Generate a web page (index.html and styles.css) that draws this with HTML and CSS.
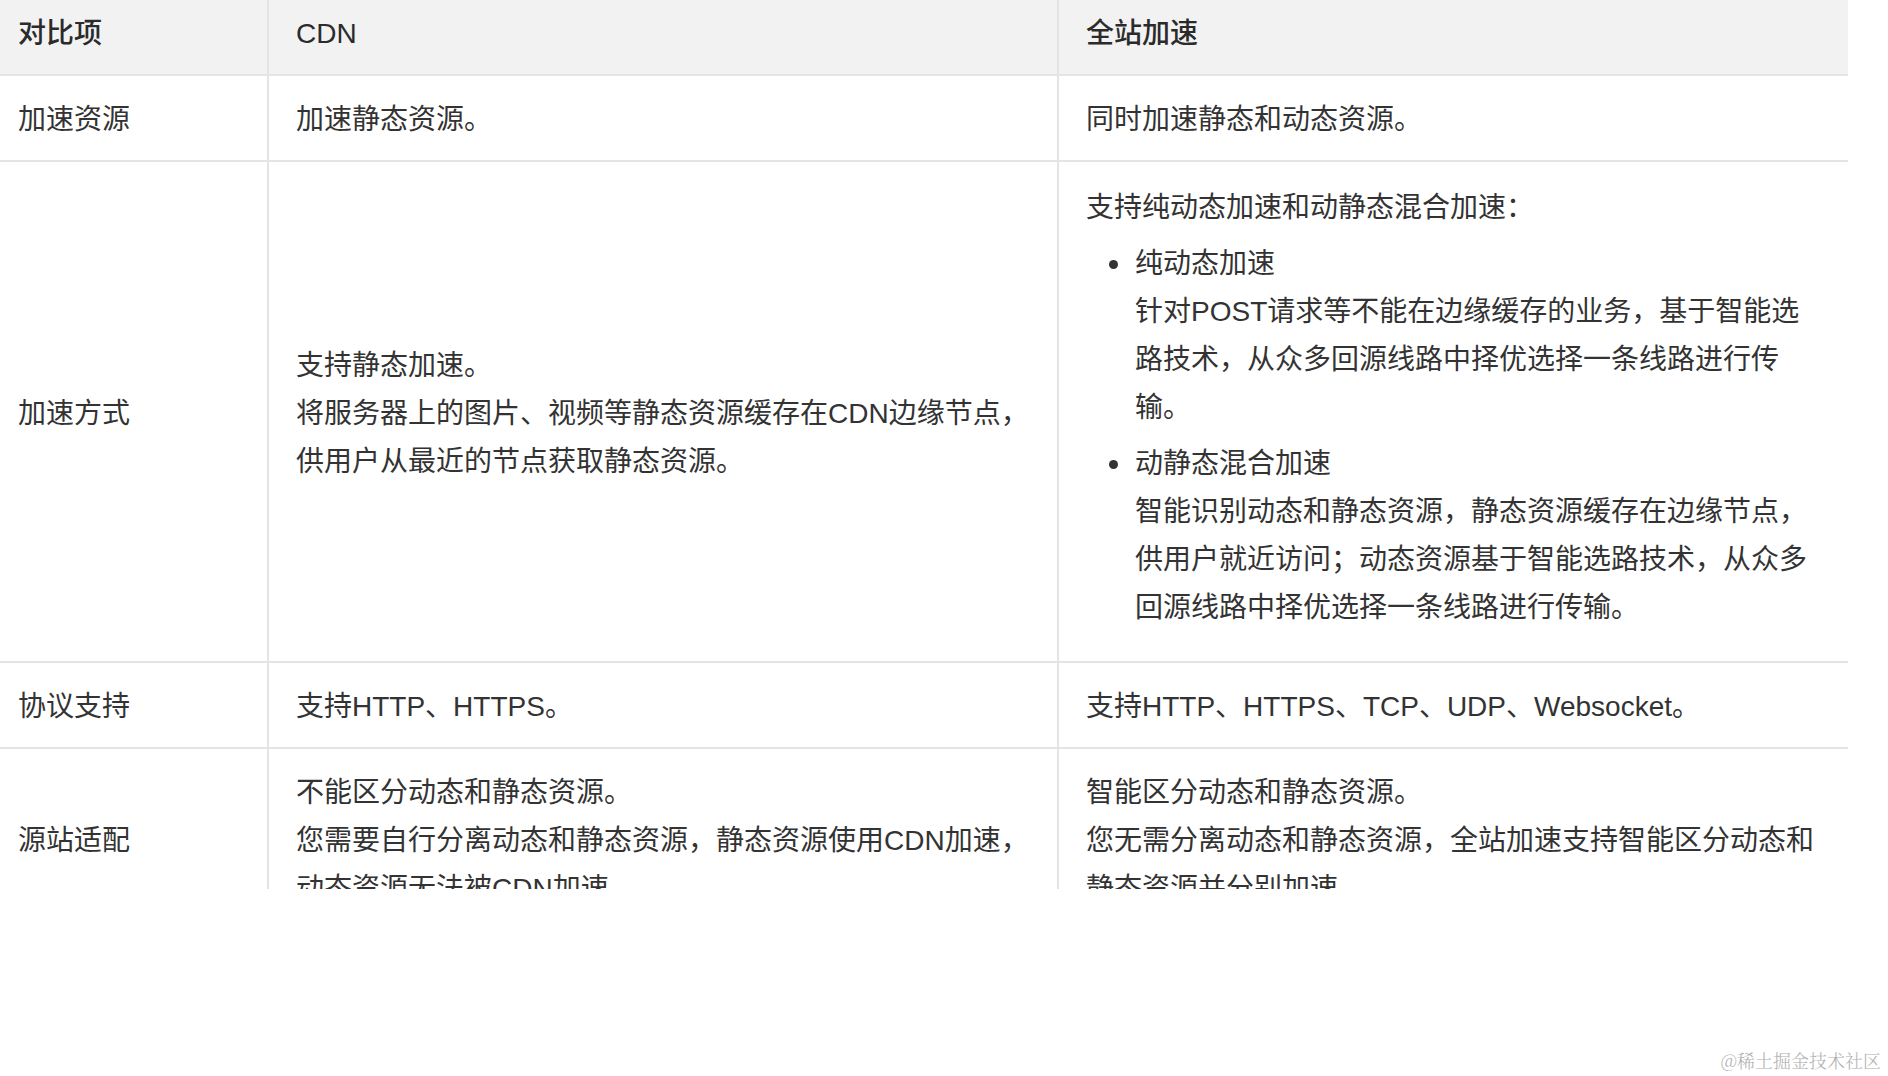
FILE: index.html
```html
<!DOCTYPE html>
<html lang="zh-CN">
<head>
<meta charset="utf-8">
<title>CDN 与全站加速对比</title>
<link rel="stylesheet" href="styles.css">
</head>
<body>
<div class="page">
  <div class="table-wrap">
    <table class="cmp">
      <colgroup>
        <col class="c1">
        <col class="c2">
        <col class="c3">
      </colgroup>
      <thead>
        <tr>
          <th class="first">对比项</th>
          <th>CDN</th>
          <th>全站加速</th>
        </tr>
      </thead>
      <tbody>
        <tr>
          <td class="first">加速资源</td>
          <td>加速静态资源。</td>
          <td>同时加速静态和动态资源。</td>
        </tr>
        <tr>
          <td class="first">加速方式</td>
          <td>支持静态加速。<br>将服务器上的图片、视频等静态资源缓存在CDN边缘节点，供用户从最近的节点获取静态资源。</td>
          <td class="rich">
            <p class="lead">支持纯动态加速和动静态混合加速：</p>
            <ul class="list">
              <li>纯动态加速<br>针对POST请求等不能在边缘缓存的业务，基于智能选路技术，从众多回源线路中择优选择一条线路进行传输。</li>
              <li>动静态混合加速<br>智能识别动态和静态资源，静态资源缓存在边缘节点，供用户就近访问；动态资源基于智能选路技术，从众多回源线路中择优选择一条线路进行传输。</li>
            </ul>
          </td>
        </tr>
        <tr>
          <td class="first">协议支持</td>
          <td>支持HTTP、HTTPS。</td>
          <td>支持HTTP、HTTPS、TCP、UDP、Websocket。</td>
        </tr>
        <tr>
          <td class="first">源站适配</td>
          <td>不能区分动态和静态资源。<br>您需要自行分离动态和静态资源，静态资源使用CDN加速，动态资源无法被CDN加速。</td>
          <td>智能区分动态和静态资源。<br>您无需分离动态和静态资源，全站加速支持智能区分动态和静态资源并分别加速。</td>
        </tr>
      </tbody>
    </table>
  </div>
  <div class="watermark">@稀土掘金技术社区</div>
</div>
</body>
</html>
```

FILE: styles.css
```css
html, body {
  margin: 0;
  padding: 0;
  background: #ffffff;
}

.page {
  position: relative;
  width: 1888px;
  height: 1076px;
  overflow: hidden;
}

.table-wrap {
  width: 1848px;
  height: 889px;
  overflow: hidden;
}

.cmp {
  width: 1848px;
  table-layout: fixed;
  border-collapse: collapse;
  font-family: "Liberation Sans", "Noto Sans CJK SC", sans-serif;
  font-size: 28px;
  line-height: 48px;
  color: #333333;
}

.c1 { width: 268px; }
.c2 { width: 790px; }
.c3 { width: 790px; }

.cmp th,
.cmp td {
  text-align: left;
  vertical-align: middle;
  padding: 20px 25px 16px 27px;
  border-bottom: 2px solid #e4e4e4;
  border-left: 2px solid #e4e4e4;
}

.cmp th.first,
.cmp td.first {
  border-left: none;
  padding-left: 18px;
}

.cmp th {
  background: #f2f2f2;
  font-weight: 500;
  color: #2b2b2b;
  padding-top: 10px;
  padding-bottom: 16px;
}

.rich .lead {
  margin: 2px 0 8px;
}

.rich .list {
  margin: 0 0 13px;
  padding-left: 49px;
  list-style: none;
}

.rich .list li {
  position: relative;
}

.rich .list li::before {
  content: "";
  position: absolute;
  left: -26px;
  top: 20px;
  width: 9px;
  height: 9px;
  border-radius: 50%;
  background: #333333;
}

.rich .list li + li {
  margin-top: 8px;
}

.watermark {
  position: absolute;
  right: 7px;
  bottom: 4px;
  font-family: "Noto Serif CJK SC", "Noto Sans CJK SC", serif;
  font-size: 18px;
  line-height: 24px;
  font-weight: 300;
  color: #b0b0b0;
}
```
